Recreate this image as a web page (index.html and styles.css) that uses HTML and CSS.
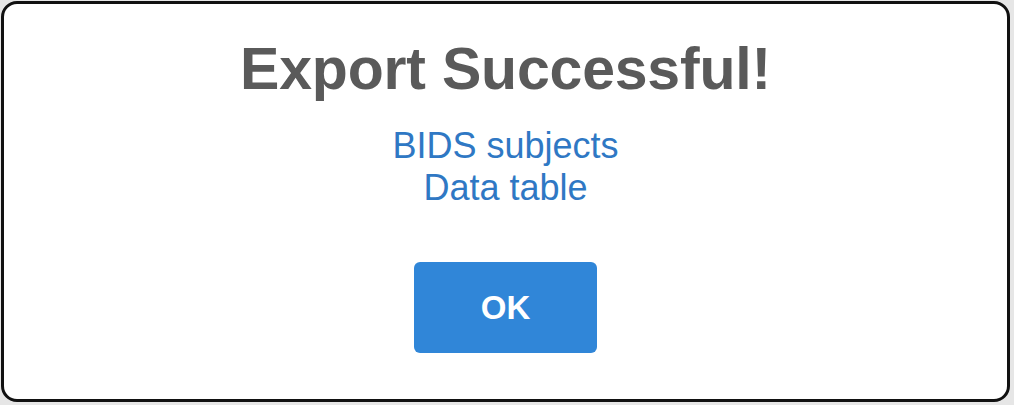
FILE: index.html
```html
<!DOCTYPE html>
<html>
<head>
<meta charset="utf-8">
<link rel="stylesheet" href="styles.css">
</head>
<body>
<div class="dialog">
  <h1 class="title">Export Successful!</h1>
  <div class="links">
    <div class="link">BIDS subjects</div>
    <div class="link">Data table</div>
  </div>
  <button class="ok">OK</button>
</div>
</body>
</html>
```
FILE: styles.css
```css
html, body {
  margin: 0;
  padding: 0;
  background: #e6e6e6;
  width: 1014px;
  height: 405px;
  overflow: hidden;
}
body {
  padding: 1px 0 0 1px;
  box-sizing: border-box;
  font-family: "Liberation Sans", Arial, sans-serif;
}
.dialog {
  box-sizing: border-box;
  width: 1009px;
  height: 401px;
  border: 3px solid #111;
  border-radius: 16px;
  background: #fff;
  display: flex;
  flex-direction: column;
  align-items: center;
  padding-top: 32px;
}
.title {
  margin: 0;
  font-size: 59px;
  line-height: 66px;
  font-weight: bold;
  color: #5a5a5a;
  letter-spacing: -0.2px;
}
.links {
  margin-top: 23px;
  display: flex;
  flex-direction: column;
  align-items: center;
}
.link {
  font-size: 36px;
  line-height: 42px;
  color: #2f78c4;
}
.ok {
  margin-top: 53px;
  width: 183px;
  height: 91px;
  border: none;
  border-radius: 6px;
  background: #3086d8;
  color: #fff;
  font-family: "Liberation Sans", Arial, sans-serif;
  font-size: 33px;
  font-weight: bold;
  padding: 0;
}
```
